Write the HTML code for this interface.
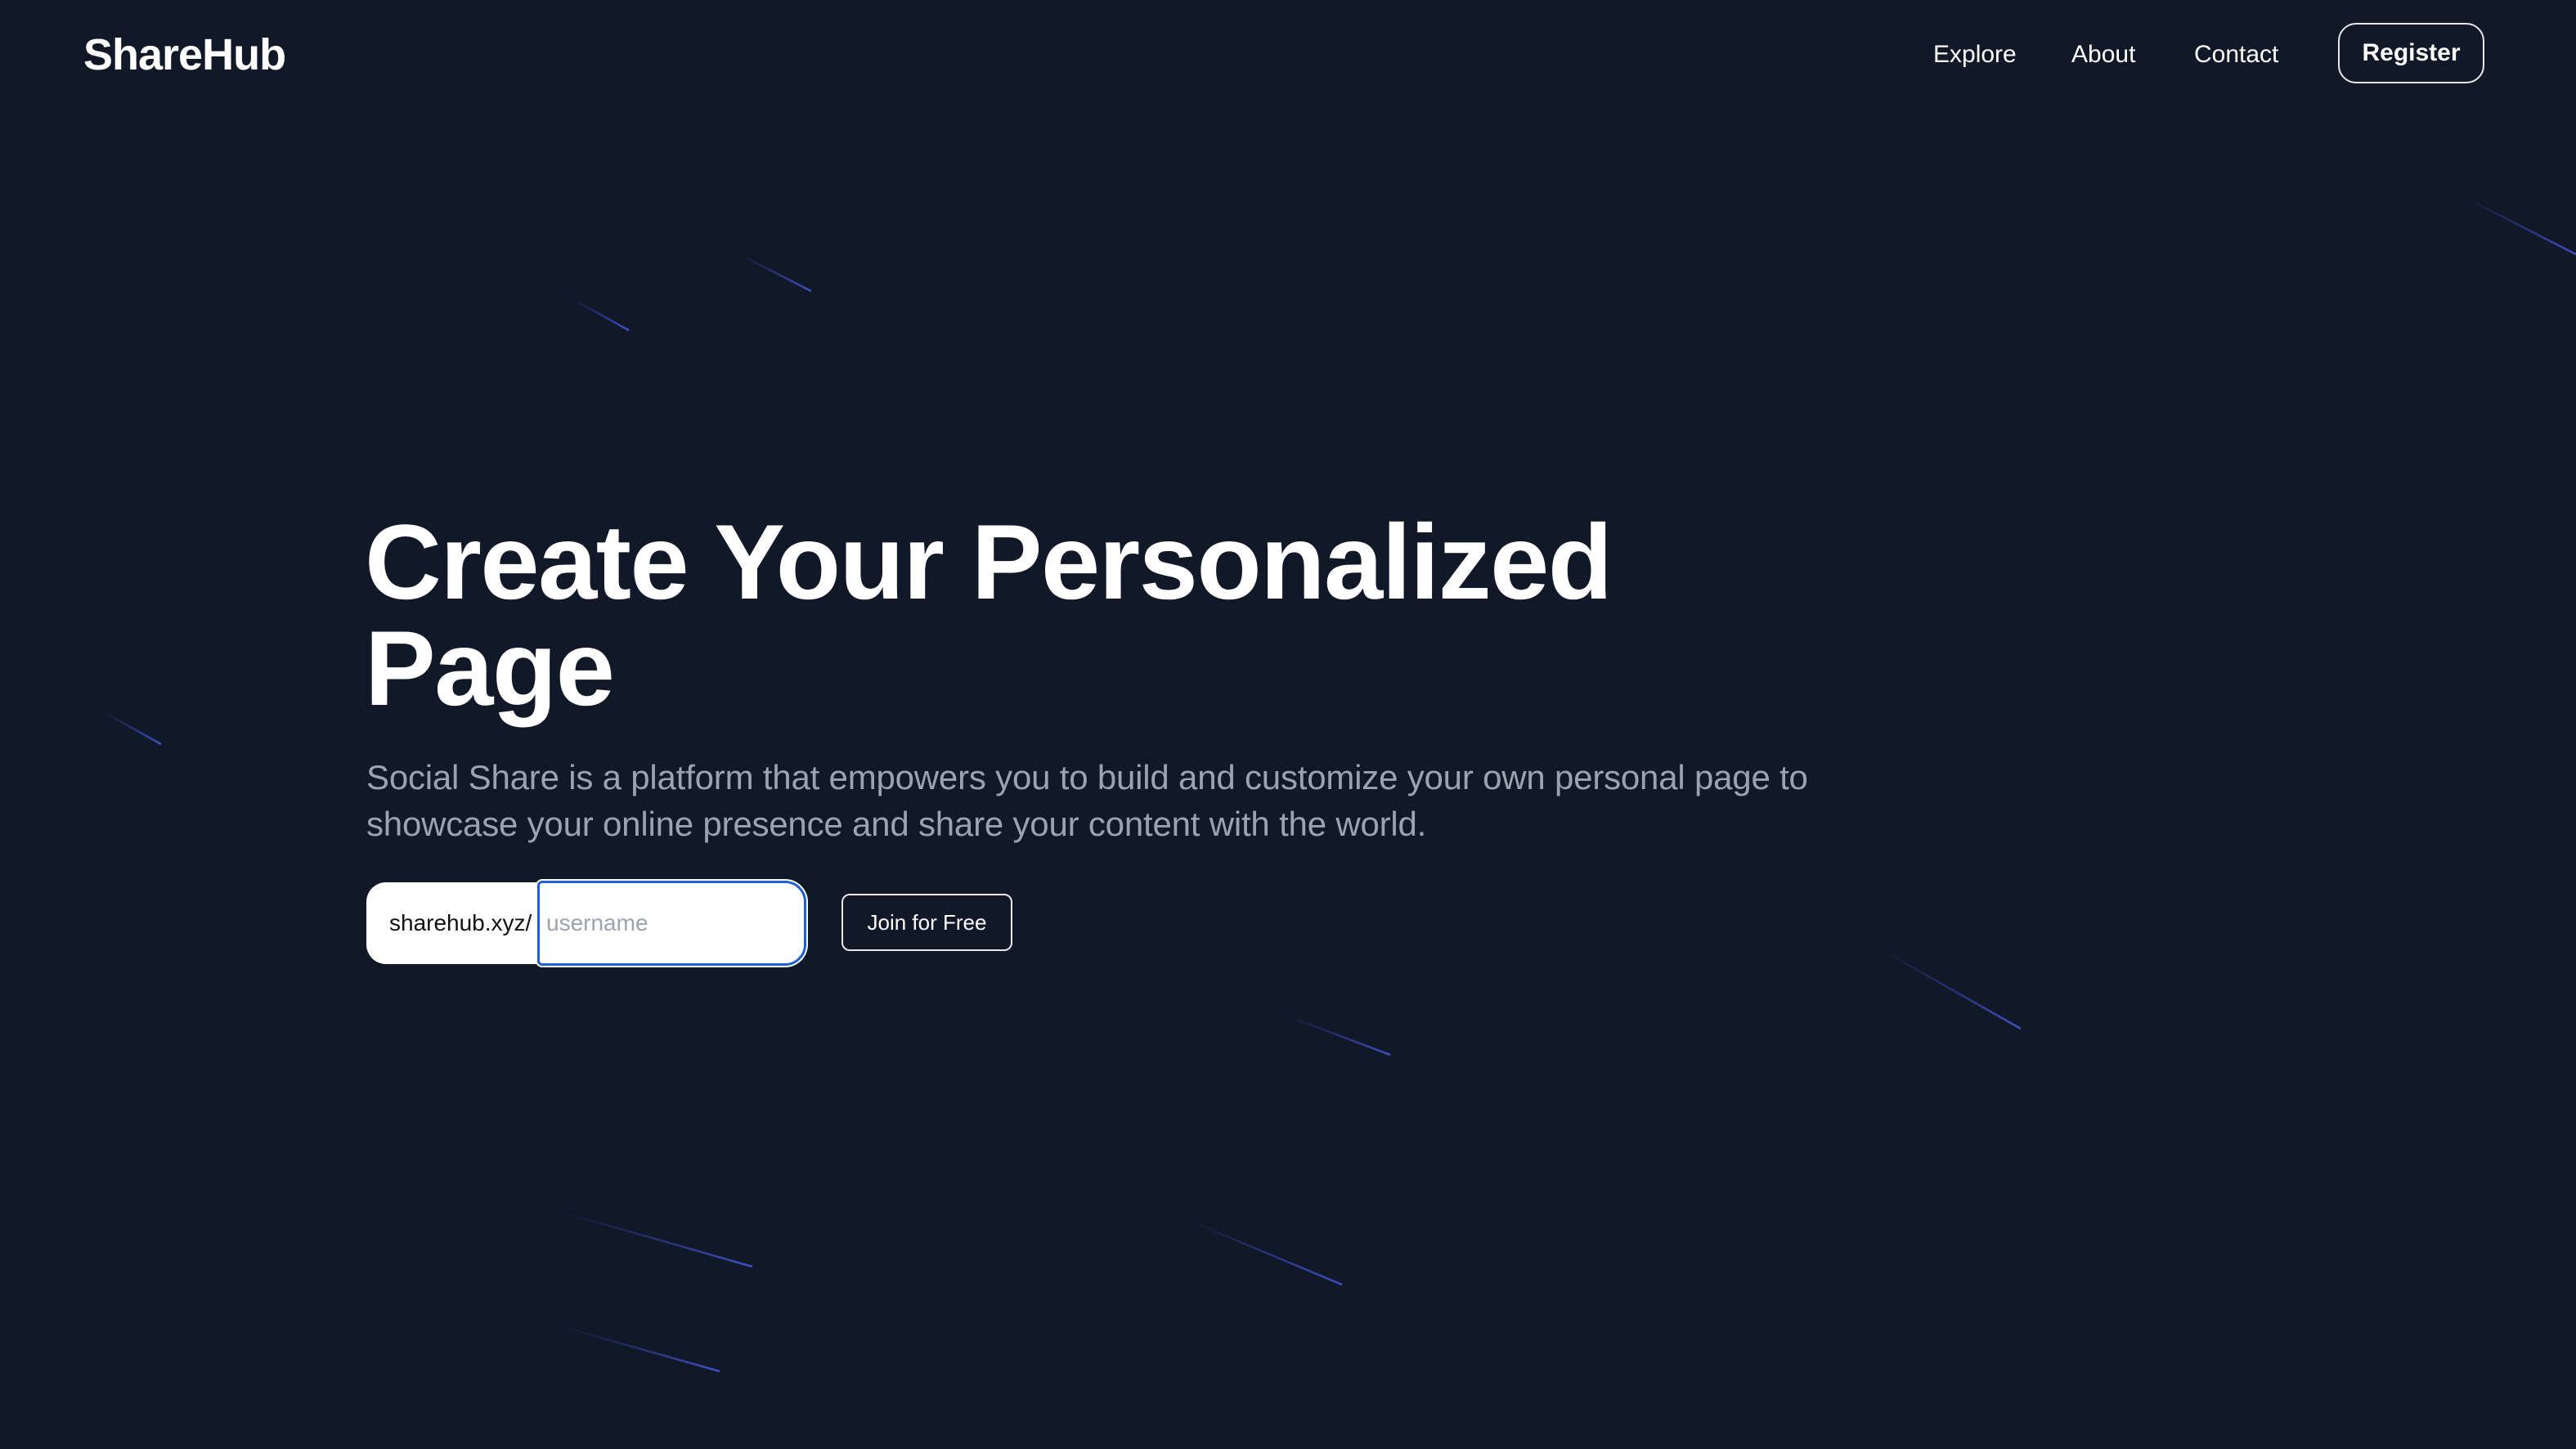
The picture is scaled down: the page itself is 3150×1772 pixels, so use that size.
<!DOCTYPE html>
<html><head><meta charset="utf-8"><style>
*{margin:0;padding:0;box-sizing:border-box}
body{width:3150px;height:1772px;background:#111827;font-family:"Liberation Sans",sans-serif;color:#fff;position:relative;overflow:hidden}
svg.bg{position:absolute;left:0;top:0}
.logo{position:absolute;left:102px;top:36px;font-size:54px;font-weight:bold;letter-spacing:-1px}
.nav{position:absolute;top:50px;font-size:30px}
.reg{position:absolute;left:2859px;top:28px;width:179px;height:74px;border:2px solid #e5e7eb;border-radius:22px;font-size:30px;font-weight:bold;display:flex;align-items:center;justify-content:center}
h1{position:absolute;left:446px;top:622px;font-size:130px;line-height:130px;font-weight:bold;letter-spacing:-1.6px;width:1800px}
p{position:absolute;left:448px;top:922px;font-size:42px;line-height:57px;color:#9ca3af;width:1850px;letter-spacing:-0.2px}
.in{position:absolute;left:448px;top:1079px;width:537px;height:100px;background:#fff;border-radius:24px}
.pre{position:absolute;left:476px;top:1113px;font-size:28px;color:#111}
.user{position:absolute;left:657px;top:1077px;width:329px;height:104px;border:3px solid #1d5fd6;border-radius:6px 26px 26px 6px;background:#fff;box-shadow:0 0 0 2px #fff}
.user span{position:absolute;left:8px;top:33px;font-size:28px;color:#9ca3af}
.join{position:absolute;left:1029px;top:1093px;width:209px;height:70px;border:2px solid #e5e7eb;border-radius:10px;font-size:26px;display:flex;align-items:center;justify-content:center}
</style></head><body>
<svg class="bg" width="3150" height="1772"><defs><linearGradient id="g" x1="0" x2="1"><stop offset="0" stop-color="#3b4bd8" stop-opacity="0"/><stop offset="1" stop-color="#4f5ff0" stop-opacity="0.8"/></linearGradient></defs>
<g stroke="url(#g)" stroke-width="2.5">
<line x1="697" y1="364" x2="769" y2="404"/>
<line x1="904" y1="311" x2="992" y2="356"/>
<line x1="3013" y1="241" x2="3150" y2="311"/>
<line x1="125" y1="870" x2="197" y2="910"/>
<line x1="2300" y1="1161" x2="2471" y2="1258"/>
<line x1="1573" y1="1242" x2="1700" y2="1290"/>
<line x1="689" y1="1483" x2="920" y2="1549"/>
<line x1="1450" y1="1491" x2="1641" y2="1571"/>
<line x1="689" y1="1623" x2="880" y2="1677"/>
</g></svg>
<div class="logo">ShareHub</div>
<div class="nav" style="left:2364px">Explore</div>
<div class="nav" style="left:2533px">About</div>
<div class="nav" style="left:2683px">Contact</div>
<div class="reg">Register</div>
<h1>Create Your Personalized Page</h1>
<p>Social Share is a platform that empowers you to build and customize your own personal page to showcase your online presence and share your content with the world.</p>
<div class="in"></div>
<div class="pre">sharehub.xyz/</div>
<div class="user"><span>username</span></div>
<div class="join">Join for Free</div>
</body></html>
